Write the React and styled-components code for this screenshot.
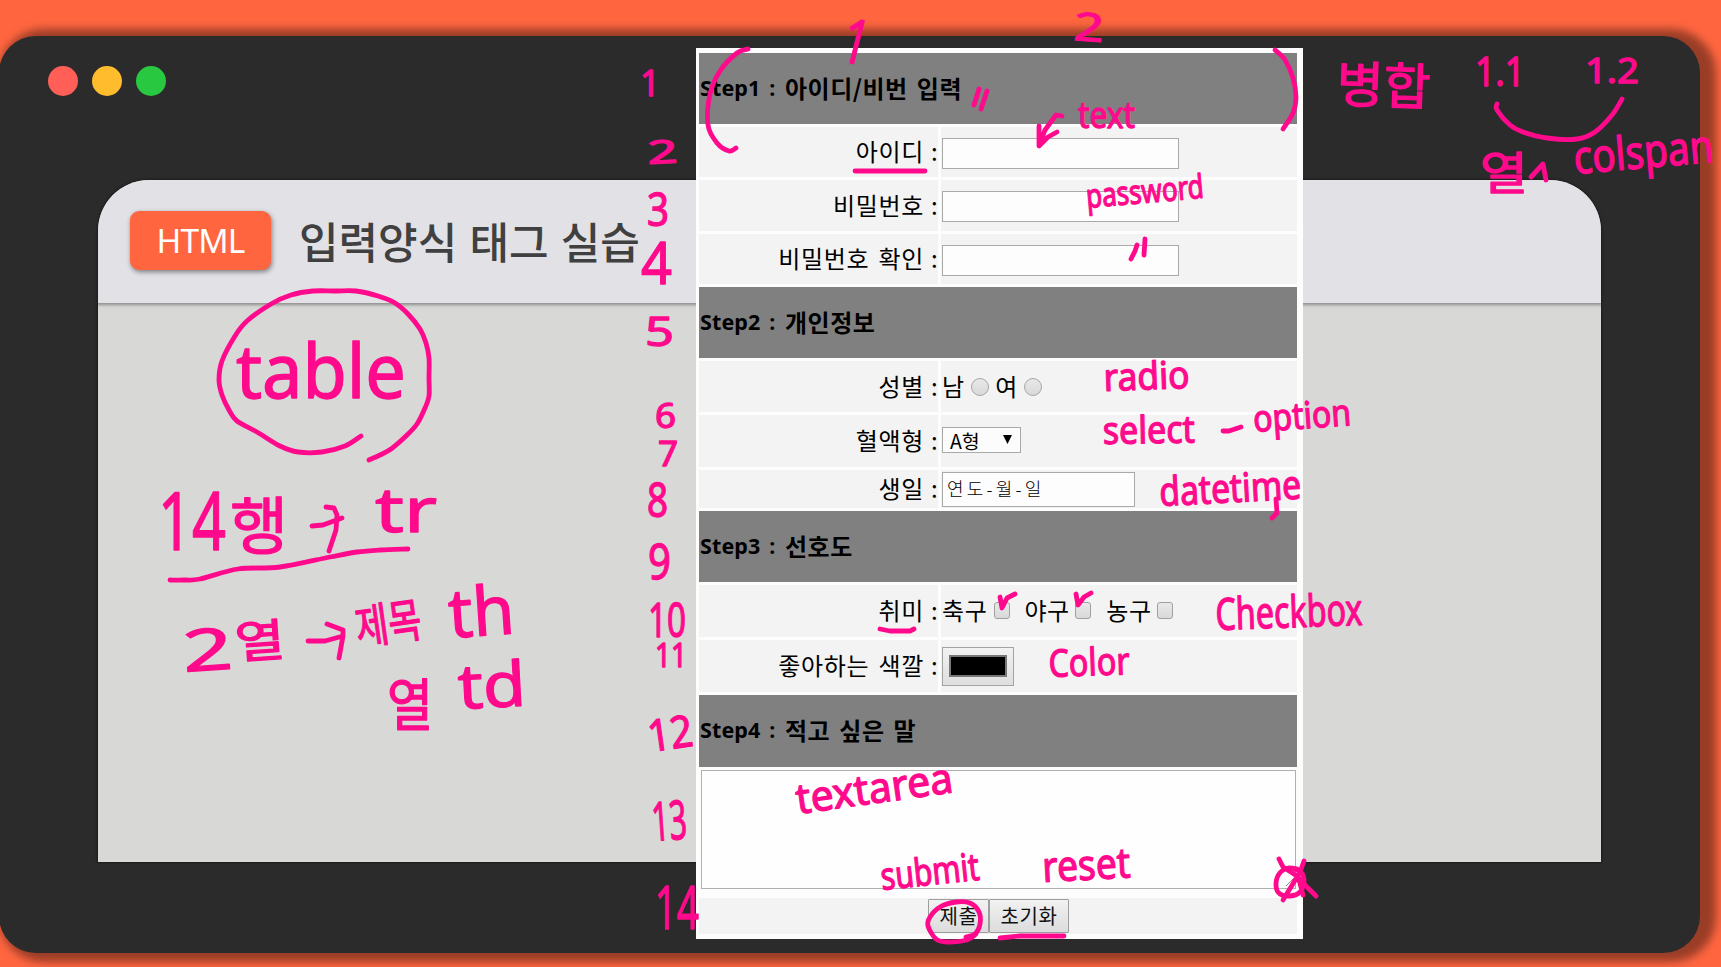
import React from "react";
import styled, { createGlobalStyle } from "styled-components";

const INK = "#ff0a8c";

const GlobalStyle = createGlobalStyle`
  * { box-sizing: border-box; }
  html, body { margin: 0; overflow: hidden; }
  body { font-family: "Noto Sans CJK KR", "Noto Sans", sans-serif; color: #000; }
`;

const Page = styled.div`
  position: relative;
  width: 1721px;
  height: 967px;
  padding-top: 36px;
  background: #ff6640;
  overflow: hidden;
`;

const Window = styled.div`
  width: 1701px;
  height: 917px;
  margin-left: -1px;
  padding: 29px 99px 0 98.5px;
  border-radius: 37px;
  background: #2b2b2b;
  box-shadow: 8px 1px 8px 8px rgba(0, 0, 0, 0.4);
`;

const Lights = styled.div`
  display: flex;
  gap: 14px;
  margin-left: -50px;
  padding-top: 0.5px;
  height: 114.5px;
`;

const Light = styled.span`
  width: 30px;
  height: 30px;
  border-radius: 50%;
  background: ${(p) => p.$color};
`;

const Panel = styled.main`
  height: 682.5px;
  border-radius: 51px 51px 0 0;
  background: #d8d8d6;
  overflow: hidden;
  box-shadow: 0 0 2px 1px #1c1c1c;
`;

const PanelHeader = styled.header`
  display: flex;
  align-items: center;
  gap: 28px;
  height: 123.5px;
  padding: 0 0 1px 32.5px;
  background: #e2e1e6;
  box-shadow: 0 1px 3px 1px rgba(0, 0, 0, 0.35);
`;

const Badge = styled.span`
  display: flex;
  align-items: center;
  justify-content: center;
  width: 141px;
  height: 59px;
  border-radius: 9px;
  background: #ff6640;
  color: #fff;
  font: 400 33.5px/1 "Noto Sans", sans-serif;
  letter-spacing: -0.8px;
  box-shadow: 1px 2px 5px rgba(0, 0, 0, 0.45);
`;

const Title = styled.h1`
  margin: 0;
  color: #404040;
  font-size: 43px;
  font-weight: 500;
  line-height: 1;
  word-spacing: 2.5px;
  white-space: nowrap;
`;

const Sheet = styled.form`
  position: absolute;
  left: 696px;
  top: 48px;
  width: 607px;
  height: 891px;
  padding: 5px 6px 5px 3px;
  background: #fdfdfd;
  display: grid;
  grid-template-columns: 239px 356px;
  grid-template-rows: 71px 50px 51px 50px 71px 51px 52px 38px 71px 52px 52px 72px 125px 36px;
  gap: 3px;
`;

const StepHeading = styled.div`
  grid-column: 1 / -1;
  display: flex;
  align-items: center;
  padding: 0 0 2px 1px;
  background: #808080;
  font-size: 24px;
  font-weight: 700;
  letter-spacing: 0.5px;
  word-spacing: 3.2px;
  line-height: 1;
  white-space: pre;
`;

const StepName = styled.span`
  width: 85px;
  font: 700 21.5px/1 "Noto Sans", sans-serif;
  letter-spacing: 0.1px;
`;

const LabelCell = styled.label`
  display: flex;
  align-items: center;
  justify-content: flex-end;
  gap: 7px;
  padding: 0 2px 2px 0;
  background: #f3f3f3;
  font-size: 24px;
  letter-spacing: 0.7px;
  word-spacing: 3px;
  line-height: 1;
`;

const Colon = styled.span`
  width: 5px;
  letter-spacing: 0;
`;

const FieldCell = styled.div`
  display: flex;
  align-items: center;
  padding: ${(p) => p.$shift || 0}px 0 0 1px;
  background: #f3f3f3;
  font-size: 24px;
  letter-spacing: 0.6px;
  line-height: 1;
`;

const TextField = styled.input`
  width: 237px;
  height: 31px;
  border: 1px solid #a9a9a9;
  background: #fdfdfd;
  padding: 0 6px;
  outline: none;
`;

const Choice = styled.span`
  display: inline-flex;
  align-items: center;
  gap: ${(p) => p.$gap}px;
  margin-right: ${(p) => p.$after}px;
`;

const ChoiceName = styled.span`
  padding-bottom: 2px;
`;

const Radio = styled.i`
  width: 18px;
  height: 18px;
  border-radius: 50%;
  border: 1px solid #a6a6a6;
  background: linear-gradient(#e8e8e8, #d9d9d9);
`;

const Check = styled.i`
  width: 16px;
  height: 17px;
  margin-bottom: 2px;
  border-radius: 3px;
  border: 1px solid #a0a0a0;
  background: linear-gradient(#e9e9e9, #d9d9d9);
`;

const SelectBox = styled.div`
  display: flex;
  align-items: center;
  justify-content: space-between;
  width: 79px;
  height: 26px;
  padding: 2px 8px 0 7px;
  margin-bottom: 2px;
  border: 1px solid #a9a9a9;
  background: #fcfcfc;
  font-size: 19.5px;
  letter-spacing: 0;
`;

const SelectArrow = styled.svg`
  margin-bottom: 3px;
`;

const DateBox = styled.div`
  display: flex;
  align-items: center;
  width: 193px;
  height: 35px;
  padding: 0 0 3px 4px;
  border: 1px solid #a9a9a9;
  background: #fdfdfd;
  font-size: 18px;
  font-weight: 300;
  letter-spacing: 3.2px;
`;

const ColorButton = styled.div`
  display: flex;
  width: 72px;
  height: 39px;
  padding: 7px 6px 8px;
  border: 1px solid #a3a3a3;
  background: linear-gradient(#f2f2f2, #dedede);
`;

const Swatch = styled.i`
  flex: 1;
  border: 2px solid #777;
  background: #000;
`;

const MessageCell = styled.div`
  grid-column: 1 / -1;
  padding: 0 1px 0 2px;
`;

const Message = styled.textarea`
  display: block;
  width: 595px;
  height: 119px;
  border: 1px solid #b0b0b0;
  background: #fefefe;
  resize: none;
  outline: none;
`;

const ButtonCell = styled.div`
  grid-column: 1 / -1;
  display: flex;
  justify-content: center;
  align-items: center;
  background: #f3f3f3;
`;

const Button = styled.button`
  width: ${(p) => p.$width}px;
  height: 34px;
  padding: 0 0 0 1px;
  border: 1px solid #9d9d9d;
  border-radius: 1px;
  background: linear-gradient(#f2f2f2, #dcdcdc);
  color: #111;
  font: 400 20px/1 "Noto Sans CJK KR", sans-serif;
  letter-spacing: 0.6px;
`;

const InkLayer = styled.svg`
  position: absolute;
  left: 0;
  top: 0;
  pointer-events: none;
`;

const InkStroke = styled.path`
  fill: none;
  stroke: ${INK};
  stroke-width: 4.8;
  stroke-linecap: round;
  stroke-linejoin: round;
`;

const InkWord = styled.text`
  fill: ${INK};
  stroke: ${INK};
  stroke-width: 1.3;
  stroke-linejoin: round;
  font-family: "Noto Sans", "Noto Sans CJK KR", sans-serif;
`;

// [text, x, baseline, width, font size, rotation]
const words = [
  ["table", 236, 398, 170, 74, 0],
  ["14", 158, 550, 68, 80, 0],
  ["행", 230, 549, 58, 62, 0],
  ["tr", 375, 532, 62, 62, 0],
  ["2", 184, 672, 50, 58, -4],
  ["열", 236, 659, 50, 45, -4],
  ["제목", 358, 645, 66, 47, -8],
  ["th", 450, 638, 66, 68, -4],
  ["열", 387, 725, 46, 56, 0],
  ["td", 459, 709, 68, 62, -3],
  ["1", 838, 60, 26, 62, 14],
  ["2", 1073, 40, 30, 39, 4],
  ["1", 640, 96, 20, 36, 0],
  ["2", 648, 164, 30, 32, -3],
  ["3", 647, 226, 22, 45, 0],
  ["4", 641, 284, 31, 58, 0],
  ["5", 645, 346, 29, 40, 0],
  ["6", 655, 428, 21, 34, 0],
  ["7", 658, 466, 20, 34, 0],
  ["8", 647, 517, 21, 47, 0],
  ["9", 648, 579, 23, 50, 0],
  ["10", 648, 637, 38, 48, 0],
  ["11", 655, 667, 32, 32, 0],
  ["12", 650, 752, 45, 44, -8],
  ["13", 653, 841, 35, 54, -4],
  ["14", 655, 929, 44, 60, 0],
  ["text", 1078, 128, 57, 36, 0],
  ["password", 1087, 208, 118, 33, -5],
  ["병합", 1336, 102, 94, 50, 2],
  ["1.1", 1475, 86, 50, 40, 0],
  ["1.2", 1585, 83, 54, 34, 0],
  ["열", 1480, 190, 48, 45, 0],
  ["colspan", 1575, 174, 140, 46, -5],
  ["radio", 1104, 391, 86, 38, -2],
  ["select", 1103, 444, 92, 38, -1],
  ["option", 1254, 432, 98, 37, -4],
  ["datetime", 1160, 506, 142, 40, -3],
  ["Checkbox", 1216, 630, 147, 44, -2],
  ["Color", 1049, 677, 81, 38, -2],
  ["textarea", 798, 814, 158, 42, -8],
  ["submit", 882, 890, 99, 38, -6],
  ["reset", 1043, 882, 88, 42, -3],
];

// Long pen movements, rounded through their sample points.
const curves = [
  "369 460 380 455 391 449 406 436 417 424 425 408 429 396 429 378 429 358 426 343 420 329 408 314 395 303 378 296 356 291 335 291 313 291 291 295 271 304 247 321 235 336 222 361 219 380 222 395 229 410 237 421 257 432 280 446 298 452 322 452 345 446 361 436",
  "170 580 185 580 200 579 238 569 280 567 330 557 357 552 380 550 408 549",
  "748 49 737 53 720 71 710 94 708 125 717 143 729 151 736 148",
  "1275 50 1285 60 1293 78 1296 97 1293 113 1283 129",
  "1497 104 1497 110 1510 125 1523 132 1547 138 1577 139 1595 132 1612 115 1622 99",
  "976 934 967 940 947 942 936 939 928 926 930 917 940 907 956 902 970 903 979 912 980 924 975 934 966 937",
  "1297 869 1288 868 1279 874 1276 886 1280 894 1290 896 1300 892 1304 881 1301 872 1294 869",
];

const strokes = [
  // arrows beside the row and column notes
  "M312 526 L323 525 342 518 M326 507 L334 508 337 515 336 530 329 551",
  "M308 641 L325 641 343 636 M327 624 L343 630 343 636 339 658",
  // ditto marks and arrow by the text fields
  "M979 89 L974 105 M987 91 L981 109",
  "M1062 116 L1056 115 1045 130 1039 145 M1039 126 L1039 146 1048 137 1057 132",
  "M1137 245 L1135 251 1131 259 M1145 239 L1144 255",
  "M855 171 L925 171",
  // small marks
  "M1531 177 L1543 164 1546 180",
  "M1223 431 L1229 431 1241 427",
  "M1276 499 L1277 513 1272 518",
  // ticks
  "M1000 597 L1002 608 1007 598 1015 594 M1076 594 L1078 605 1084 597 1091 593",
  "M880 629 L890 631 910 631 914 629",
  "M1000 938 L1020 936 1064 936",
  // cross over the resize handle
  "M1279 859 L1283 867 1297 876 1307 887 1316 896 M1304 861 L1300 872 1291 887 1283 900 M1298 876 L1303 895",
];

function smooth(list) {
  const n = list.split(" ").map(Number);
  const pts = [];
  for (let i = 0; i < n.length; i += 2) pts.push([n[i], n[i + 1]]);
  let d = `M${pts[0]}`;
  for (let i = 0; i < pts.length - 1; i += 1) {
    const a = pts[Math.max(0, i - 1)];
    const b = pts[i];
    const c = pts[i + 1];
    const e = pts[Math.min(pts.length - 1, i + 2)];
    d += `C${b[0] + (c[0] - a[0]) / 6} ${b[1] + (c[1] - a[1]) / 6} ${c[0] - (e[0] - b[0]) / 6} ${c[1] - (e[1] - b[1]) / 6} ${c[0]} ${c[1]}`;
  }
  return d;
}

const Label = ({ children }) => (
  <LabelCell>
    {children}
    <Colon>:</Colon>
  </LabelCell>
);

const Step = ({ n, children }) => (
  <StepHeading>
    <StepName>Step{n} :</StepName>
    {children}
  </StepHeading>
);

export default function App() {
  return (
    <>
      <GlobalStyle />
      <Page>
        <Window>
          <Lights>
            <Light $color="#ff5f57" />
            <Light $color="#ffbd2e" />
            <Light $color="#28c840" />
          </Lights>
          <Panel>
            <PanelHeader>
              <Badge>HTML</Badge>
              <Title>입력양식 태그 실습</Title>
            </PanelHeader>
          </Panel>
        </Window>

        <Sheet>
          <Step n={1}>아이디/비번 입력</Step>
          <Label>아이디</Label>
          <FieldCell $shift={2}><TextField type="text" /></FieldCell>
          <Label>비밀번호</Label>
          <FieldCell $shift={2}><TextField type="password" /></FieldCell>
          <Label>비밀번호 확인</Label>
          <FieldCell $shift={2}><TextField type="password" /></FieldCell>

          <Step n={2}>개인정보</Step>
          <Label>성별</Label>
          <FieldCell>
            <Choice $gap={6} $after={6.5}><ChoiceName>남</ChoiceName><Radio /></Choice>
            <Choice $gap={6} $after={0}><ChoiceName>여</ChoiceName><Radio /></Choice>
          </FieldCell>
          <Label>혈액형</Label>
          <FieldCell>
            <SelectBox>
              A형
              <SelectArrow width="9" height="10" viewBox="0 0 9 10"><path d="M0 0H9L4.5 9Z" /></SelectArrow>
            </SelectBox>
          </FieldCell>
          <Label>생일</Label>
          <FieldCell><DateBox>연도-월-일</DateBox></FieldCell>

          <Step n={3}>선호도</Step>
          <Label>취미</Label>
          <FieldCell>
            <Choice $gap={7} $after={14}><ChoiceName>축구</ChoiceName><Check /></Choice>
            <Choice $gap={5} $after={15.5}><ChoiceName>야구</ChoiceName><Check /></Choice>
            <Choice $gap={5.5} $after={0}><ChoiceName>농구</ChoiceName><Check /></Choice>
          </FieldCell>
          <Label>좋아하는 색깔</Label>
          <FieldCell><ColorButton><Swatch /></ColorButton></FieldCell>

          <Step n={4}>적고 싶은 말</Step>
          <MessageCell><Message /></MessageCell>
          <ButtonCell>
            <Button type="button" $width={61}>제출</Button>
            <Button type="button" $width={80}>초기화</Button>
          </ButtonCell>
        </Sheet>

        <InkLayer width="1721" height="967" viewBox="0 0 1721 967">
          <path d="M1286 886l8-8M1290 887l4-4" stroke="#888" strokeWidth="1" />
          {curves.map((c) => <InkStroke key={c} d={smooth(c)} />)}
          {strokes.map((d) => <InkStroke key={d} d={d} />)}
          {words.map(([text, x, y, width, size, turn]) => (
            <InkWord
              key={`${text}-${x}-${y}`}
              x={x}
              y={y}
              fontSize={size}
              textLength={width}
              lengthAdjust="spacingAndGlyphs"
              transform={`rotate(${turn} ${x} ${y})`}
            >
              {text}
            </InkWord>
          ))}
        </InkLayer>
      </Page>
    </>
  );
}
